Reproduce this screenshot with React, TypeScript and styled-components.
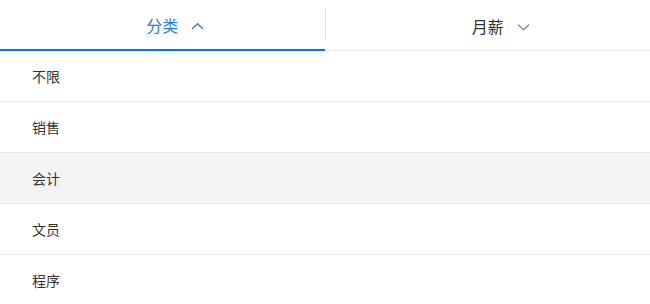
import React from "react";
import styled, { createGlobalStyle } from "styled-components";

const Global = createGlobalStyle`
  html, body { margin: 0; padding: 0; background: #fff; }
  body { font-family: "Noto Sans CJK SC", "Noto Sans", sans-serif; }
  * { box-sizing: border-box; }
`;

const Page = styled.div`
  width: 650px;
  height: 304px;
  overflow: hidden;
  background: #fff;
`;

const Header = styled.div`
  display: flex;
  align-items: stretch;
  height: 51px;
`;

const Tab = styled.div<{ $active?: boolean }>`
  flex: 1;
  display: flex;
  align-items: center;
  justify-content: center;
  font-size: 16px;
  color: ${(p) => (p.$active ? "#1f7fd0" : "#333")};
  border-bottom: ${(p) => (p.$active ? "2px solid #0a78d0" : "1px solid #e6e6e6")};
  padding-top: ${(p) => (p.$active ? "0" : "1px")};
`;

const Divider = styled.div`
  width: 1px;
  align-self: flex-start;
  margin-top: 8px;
  height: 32px;
  background: #e4e4e4;
`;

const Arrow = styled.svg`
  margin-left: 13px;
  margin-right: -26px;
  margin-top: 3px;
  width: 13px;
  height: 8px;
  flex: none;
`;

const List = styled.div`
  display: flex;
  flex-direction: column;
`;

const Row = styled.div<{ $selected?: boolean }>`
  height: 51px;
  flex: none;
  display: flex;
  align-items: center;
  padding-left: 32px;
  font-size: 14px;
  color: #333;
  background: ${(p) => (p.$selected ? "#f4f4f4" : "#fff")};
  border-bottom: 1px solid #ebebeb;
`;

const items = ["不限", "销售", "会计", "文员", "程序"];

export default function App() {
  return (
    <Page>
      <Global />
      <Header>
        <Tab $active>
          分类
          <Arrow viewBox="0 0 13 8">
            <polyline points="1,7 6.5,1.8 12,7" fill="none" stroke="#2a86d6" strokeWidth="1.4" />
          </Arrow>
        </Tab>
        <Divider />
        <Tab>
          月薪
          <Arrow viewBox="0 0 13 8">
            <polyline points="1,1.5 6.5,6.8 12,1.5" fill="none" stroke="#888" strokeWidth="1.2" />
          </Arrow>
        </Tab>
      </Header>
      <List>
        {items.map((t) => (
          <Row key={t} $selected={t === "会计"}>
            {t}
          </Row>
        ))}
      </List>
    </Page>
  );
}
